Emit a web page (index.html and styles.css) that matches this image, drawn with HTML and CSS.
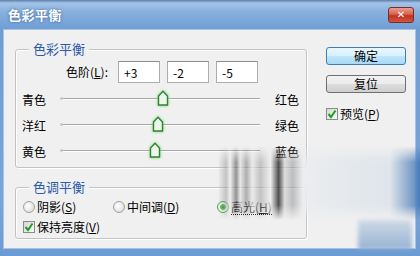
FILE: index.html
```html
<!DOCTYPE html>
<html lang="zh-CN">
  <head>
    <meta charset="UTF-8" />
    <title>色彩平衡</title>
    <link rel="stylesheet" href="styles.css">
  </head>

  <body>
    <div class="window">
      <div class="titlebar">
        <span class="title">色彩平衡</span>
        <span class="close">✕</span>
      </div>

      <div class="client">
        <div class="left-col">
          <div class="group group-balance">
            <span class="legend">色彩平衡</span>
            <div class="levels-row">
              <span class="levels-label">色阶(<u>L</u>):</span>
              <input class="level" value="+3" />
              <input class="level" value="-2" />
              <input class="level" value="-5" />
            </div>

            <div class="slider-row">
              <span class="side">青色</span>
              <div class="track">
                <svg class="thumb" style="left: 97px" width="12" height="16" viewBox="0 0 12 16">
                  <path d="M1.5 6 L6 1.2 L10.5 6 V15 H1.5 Z" />
                </svg>
              </div>
              <span class="side side-right">红色</span>
            </div>
            <div class="slider-row">
              <span class="side">洋红</span>
              <div class="track">
                <svg class="thumb" style="left: 92px" width="12" height="16" viewBox="0 0 12 16">
                  <path d="M1.5 6 L6 1.2 L10.5 6 V15 H1.5 Z" />
                </svg>
              </div>
              <span class="side side-right">绿色</span>
            </div>
            <div class="slider-row">
              <span class="side">黄色</span>
              <div class="track">
                <svg class="thumb" style="left: 89px" width="12" height="16" viewBox="0 0 12 16">
                  <path d="M1.5 6 L6 1.2 L10.5 6 V15 H1.5 Z" />
                </svg>
              </div>
              <span class="side side-right">蓝色</span>
            </div>
          </div>

          <div class="group group-tone">
            <span class="legend">色调平衡</span>
            <div class="radio-row">
              <label class="option option-shadow"><span class="radio"></span>阴影(<u>S</u>)</label>
              <label class="option option-mid"><span class="radio"></span>中间调(<u>D</u>)</label>
              <label class="option"><span class="radio radio-on"></span><span class="focus">高光(<u>H</u>)</span></label>
            </div>
            <div class="check-row">
              <label class="option">
                <span class="check"><svg width="10" height="10" viewBox="0 0 10 10"><path d="M1.5 5 L4 8 L8.5 1.5" /></svg></span>保持亮度(<u>V</u>)
              </label>
            </div>
          </div>
        </div>

        <div class="right-col">
          <button class="btn btn-default">确定</button>
          <button class="btn">复位</button>
          <label class="option preview">
            <span class="check"><svg width="10" height="10" viewBox="0 0 10 10"><path d="M1.5 5 L4 8 L8.5 1.5" /></svg></span>预览(<u>P</u>)
          </label>
        </div>
      </div>

      <!-- blurred watermark left on the capture -->
      <div class="smudge"></div>
      <div class="smudge-blob"></div>
    </div>
  </body>
</html>
```

FILE: styles.css
```css
* {
  box-sizing: border-box;
  margin: 0;
  padding: 0;
}

body {
  font-family: "Noto Sans CJK SC", "Noto Sans", sans-serif;
  font-size: 12px;
  color: #000;
  background: #fff;
}

.window {
  position: relative;
  width: 420px;
  height: 256px;
  display: flex;
  flex-direction: column;
  background: linear-gradient(to bottom, #5c7fa9 0, #a3c3e7 3px, #88b0de 12px, #6e9dd4 30px, #79a6da 200px, #6b9bd4 256px);
  overflow: hidden;
}

.titlebar {
  height: 30px;
  display: flex;
  justify-content: space-between;
  align-items: flex-start;
}

.title {
  margin: 7px 0 0 8px;
  color: #fff;
  font-size: 13px;
  font-weight: 700;
  line-height: 16px;
  letter-spacing: 0.5px;
  text-shadow: 0 0 3px rgba(40, 80, 140, 0.8);
}

.close {
  margin: 7px 6px 0 0;
  width: 26px;
  height: 16px;
  border: 1px solid #7b2c25;
  border-radius: 3px;
  background: linear-gradient(to bottom, #e8a093 0, #d6604f 45%, #c2321f 55%, #d2553f 100%);
  color: #fff;
  font-size: 10px;
  font-weight: 700;
  line-height: 14px;
  text-align: center;
  font-family: "DejaVu Sans", sans-serif;
}

.client {
  flex: 1;
  margin: 0 5px 8px 4px;
  display: flex;
  align-items: flex-start;
  background: #f0f0f0;
  box-shadow: 0 0 0 1px #a8c4e4;
}

.left-col {
  padding: 19px 0 0 11px;
  width: 303px;
}

.group {
  position: relative;
  width: 292px;
  border: 1px solid #c3c3c3;
  border-radius: 3px;
  box-shadow: inset 1px 1px #fff, 1px 1px #fff;
}

.legend {
  position: absolute;
  top: -9px;
  left: 13px;
  padding: 0 4px;
  background: #f0f0f0;
  color: #2b5aa8;
  font-size: 13px;
  line-height: 16px;
}

.group-balance {
  height: 119px;
}

.levels-row {
  display: flex;
  align-items: center;
  gap: 7px;
  margin-top: 11px;
  height: 22px;
}

.levels-label {
  width: 92px;
  margin-right: 3px;
  text-align: right;
  line-height: 16px;
}

.level {
  width: 42px;
  height: 22px;
  padding-left: 5px;
  border: 1px solid #abadb3;
  border-top-color: #8e8f8f;
  background: #fff;
  font-family: "Noto Sans CJK SC", sans-serif;
  font-size: 12px;
  color: #000;
  outline: none;
}

.levels-row + .slider-row {
  margin-top: 2px;
}

.slider-row {
  display: flex;
  align-items: center;
  height: 26px;
  padding-left: 6px;
}

.side {
  width: 38px;
  line-height: 16px;
  padding-top: 4px;
}

.side-right {
  margin-left: 15px;
  width: 30px;
}

.track {
  position: relative;
  width: 200px;
  height: 26px;
}

.track::before {
  content: "";
  position: absolute;
  left: 0;
  right: 0;
  top: 13px;
  height: 1px;
  background: #a7a7a7;
  box-shadow: 0 1px #fff;
}

.track::after {
  content: "";
  position: absolute;
  left: 0;
  top: 12px;
  width: 3px;
  height: 3px;
  border-radius: 50%;
  background: #c9c9c9;
}

.thumb {
  position: absolute;
  top: 5px;
  filter: drop-shadow(0 0 1.5px #74d474);
}

.thumb path {
  fill: #eef4ee;
  stroke: #2f862f;
  stroke-width: 1.4;
}

.group-tone {
  margin-top: 19px;
  height: 52px;
  padding-top: 9px;
}

.radio-row,
.check-row {
  display: flex;
  align-items: center;
  height: 20px;
  padding-left: 7px;
}

.option {
  display: flex;
  align-items: center;
  line-height: 16px;
}

.option-shadow {
  width: 90px;
}

.option-mid {
  width: 104px;
}

.radio {
  width: 12px;
  height: 12px;
  margin-right: 2px;
  border: 1px solid #a0a2a2;
  border-radius: 50%;
  background: radial-gradient(circle at 40% 40%, #fff 0, #e6e6e6 60%, #cfcfcf 100%);
}

.radio-on {
  border-color: #4aa44a;
  background: radial-gradient(circle, #2f9f2f 0, #5cc25c 35%, #e8f5e8 45%, #fff 100%);
}

.focus {
  border-bottom: 1px dotted #000;
  line-height: 14px;
}

.check {
  width: 12px;
  height: 12px;
  margin-right: 2px;
  display: flex;
  align-items: center;
  justify-content: center;
  border: 1px solid #8a8c8c;
  background: linear-gradient(135deg, #d5d5d5, #fbfbfb);
}

.check path {
  fill: none;
  stroke: #1fa01f;
  stroke-width: 2;
}

.right-col {
  display: flex;
  flex-direction: column;
  margin-left: 19px;
  padding-top: 17px;
}

.btn {
  width: 80px;
  height: 18px;
  border: 1px solid #707070;
  border-radius: 3px;
  background: linear-gradient(to bottom, #f2f2f2 0, #ebebeb 50%, #dddddd 50%, #cfcfcf 100%);
  font-family: "Noto Sans CJK SC", sans-serif;
  font-size: 12px;
  line-height: 14px;
  color: #000;
}

.btn + .btn {
  margin-top: 10px;
}

.btn-default {
  border-color: #3c7fb1;
  background: linear-gradient(to bottom, #eaf6fd 0, #d9f0fc 50%, #bee6fd 50%, #a7d9f5 100%);
}

.preview {
  margin-top: 13px;
}

.smudge {
  position: absolute;
  left: 218px;
  top: 146px;
  width: 202px;
  height: 74px;
  background: linear-gradient(to right,
    rgba(240, 240, 240, 0) 0%,
    rgba(150, 150, 150, 0.5) 4%,
    rgba(238, 238, 238, 0.75) 6%,
    rgba(70, 70, 70, 0.55) 9%,
    rgba(228, 228, 228, 0.75) 11%,
    rgba(110, 110, 110, 0.5) 14%,
    rgba(232, 232, 232, 0.75) 17%,
    rgba(150, 150, 150, 0.5) 21%,
    rgba(238, 238, 238, 0.75) 26%,
    rgba(40, 40, 40, 0.8) 30%,
    rgba(210, 210, 210, 0.65) 33%,
    rgba(140, 140, 140, 0.5) 37%,
    rgba(234, 236, 238, 0.85) 42%,
    rgba(220, 227, 234, 0.85) 85%,
    rgba(70, 120, 180, 0.9) 100%);
  -webkit-mask-image: linear-gradient(to bottom, transparent 0, #000 22%, #000 80%, transparent 100%);
  mask-image: linear-gradient(to bottom, transparent 0, #000 22%, #000 80%, transparent 100%);
}

.smudge-blob {
  position: absolute;
  left: 358px;
  top: 220px;
  width: 54px;
  height: 30px;
  background: linear-gradient(to bottom, #c9d6e3, #86a8cf);
  filter: blur(2px);
  opacity: 0.85;
}
```
